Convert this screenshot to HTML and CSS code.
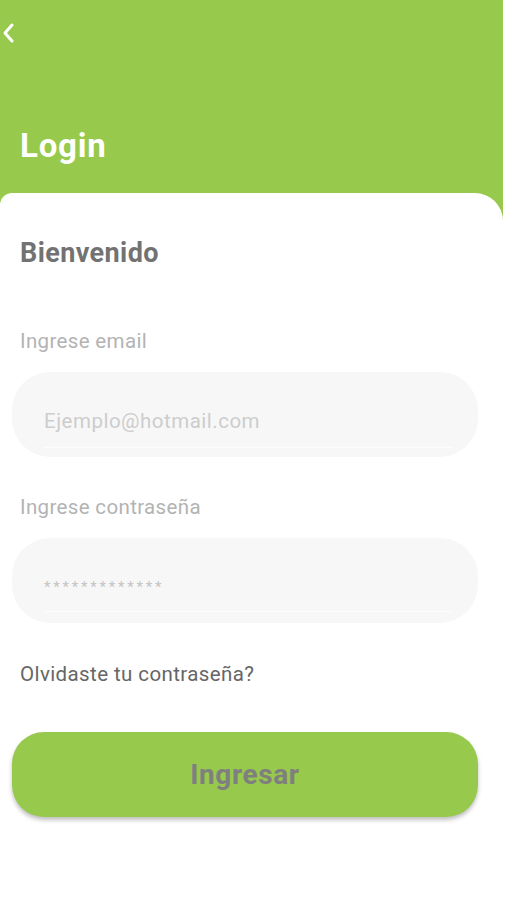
FILE: index.html
```html
<!DOCTYPE html>
<html lang="es">
<head>
  <meta charset="UTF-8" />
  <title>Login</title>
  <link rel="stylesheet" href="styles.css">
</head>
<body>

  <div class="cabecera">
    <button class="volver" aria-label="Volver">
      <svg width="14" height="22" viewBox="0 0 14 22">
        <polyline points="11,3 4,11 11,19" fill="none" stroke="#fff" stroke-width="3" stroke-linecap="round" stroke-linejoin="round" />
      </svg>
    </button>
    <h1 class="titulo">Login</h1>
  </div>

  <div class="tarjeta">
    <h2 class="saludo">Bienvenido</h2>

    <label class="etiqueta" for="email">Ingrese email</label>
    <div class="campo">
      <input id="email" type="email" placeholder="Ejemplo@hotmail.com">
    </div>

    <label class="etiqueta etiqueta-clave" for="clave">Ingrese contraseña</label>
    <div class="campo">
      <input id="clave" class="clave" type="password" placeholder="*************">
    </div>

    <a class="olvido" href="#">Olvidaste tu contraseña?</a>

    <button class="ingresar">Ingresar</button>
  </div>

</body>
</html>
```

FILE: styles.css
```css
body {
  margin: 0;
  font-family: Roboto, "Liberation Sans", sans-serif;
  background-color: #fff;
  width: 506px;
}

.cabecera {
  width: 503px;
  height: 220px;
  background-color: #97c94c;
  padding-top: 22px;
  box-sizing: border-box;
}

.volver {
  display: block;
  margin-left: 1px;
  padding: 0;
  border: none;
  background: none;
  height: 22px;
  cursor: pointer;
}

.volver svg {
  display: block;
}

.titulo {
  margin: 82px 0 0 20px;
  font-size: 33px;
  line-height: 40px;
  letter-spacing: 0.8px;
  font-weight: 700;
  color: #fff;
}

.tarjeta {
  width: 503px;
  margin-top: -27px;
  background-color: #fff;
  border-radius: 12px 28px 0 0;
  padding: 44px 25px 60px 20px;
  box-sizing: border-box;
}

.saludo {
  margin: 0;
  font-size: 27px;
  line-height: 32px;
  letter-spacing: 0.4px;
  font-weight: 700;
  color: #727272;
}

.etiqueta {
  display: block;
  margin-top: 60px;
  font-size: 20.5px;
  line-height: 24px;
  letter-spacing: 0.35px;
  color: #b3b3b3;
}

.etiqueta-clave {
  margin-top: 38px;
}

.campo {
  margin: 19px 0 0 -8px;
  height: 85px;
  border-radius: 38px;
  background-color: #f7f7f7;
  display: flex;
  align-items: center;
  padding: 0 26px 0 32px;
  box-sizing: border-box;
}

.campo input {
  width: 100%;
  height: 36px;
  margin-top: 22px;
  padding: 0 0 8px;
  border: none;
  border-bottom: 1px solid #fdfdfd;
  background: transparent;
  font-family: Roboto, "Liberation Sans", sans-serif;
  font-size: 20.5px;
  letter-spacing: 0.5px;
  color: #555;
  outline: none;
}

.campo input::placeholder {
  color: #cdcdcd;
}

.campo .clave {
  margin-top: 18px;
}

.campo .clave::placeholder {
  font-size: 15px;
  letter-spacing: 2.8px;
  color: #c4c4c4;
}

.olvido {
  display: block;
  margin-top: 39px;
  font-size: 20.5px;
  line-height: 24px;
  letter-spacing: 0.4px;
  color: #666;
  text-decoration: none;
}

.ingresar {
  display: block;
  width: 466px;
  height: 85px;
  margin: 46px 0 0 -8px;
  border: none;
  border-radius: 32px;
  background-color: #97c94c;
  box-shadow: 0 3px 4px rgba(0, 0, 0, 0.25);
  font-family: Roboto, "Liberation Sans", sans-serif;
  font-size: 28px;
  letter-spacing: 0.6px;
  font-weight: 700;
  color: #7f7f7f;
  cursor: pointer;
}
```
